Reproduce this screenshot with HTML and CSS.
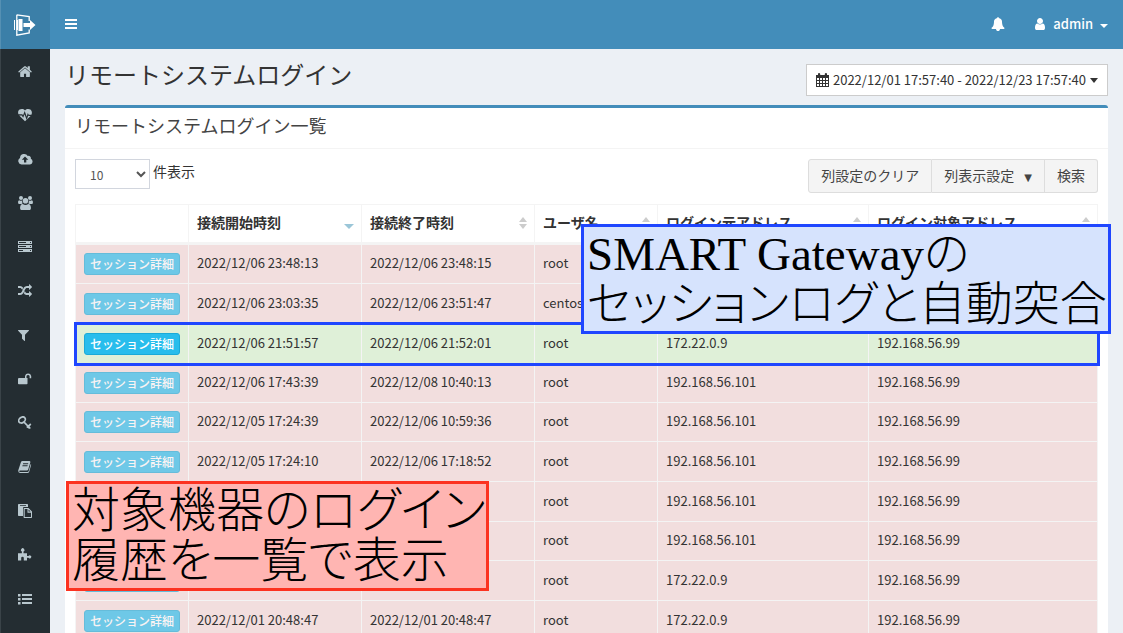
FILE: index.html
```html
<!DOCTYPE html>
<html lang="ja">
<head>
<meta charset="utf-8">
<title>リモートシステムログイン</title>
<link rel="stylesheet" href="styles.css">
</head>
<body>
<header class="topbar">
  <a class="logo" href="#" aria-label="ホーム">
    <svg width="22" height="22" viewBox="0 0 22 22"><path d="M2.8 .8 15.2 2.6V7M15.2 15.5V19L2.8 21.2V.8" fill="none" stroke="#fff" stroke-width="1.3"/><path d="M0 6h1v10H0zM2.5 6H4v10H2.500zM4.500 5H8.500V17H4.500zM9.500 9H16V6L21.500 11 16 16V13H9.500z" fill="#fff"/></svg>
  </a>
  <button class="bar-btn" aria-label="メニュー">
    <svg width="12" height="12" viewBox="0 0 12 12"><path d="M0 0h12v2H0zM0 4h12v2H0zM0 8h12v2H0z" fill="currentColor"/></svg>
  </button>
  <nav class="top-right">
    <button class="bar-btn" aria-label="通知">
      <svg width="14" height="14" viewBox="0 0 1792 1792"><path fill="currentColor" d="M1728 1408q0 52-38 90t-90 38h-448q0 106-75 181t-181 75-181-75-75-181h-448q-52 0-90-38t-38-90q50-42 91-88t85-119.500 74.500-158.500 50-206 19.500-260q0-152 117-282.500t307-158.500q-8-19-8-39 0-40 28-68t68-28 68 28 28 68q0 20-8 39 190 28 307 158.500t117 282.500q0 139 19.500 260t50 206 74.500 158.500 85 119.500 91 88z"/></svg>
    </button>
    <button class="bar-btn">
      <svg width="14" height="14" viewBox="0 0 1792 1792"><path fill="currentColor" d="M1536 1399q0 109-62.500 187t-150.500 78h-854q-88 0-150.500-78t-62.500-187q0-85 8.500-160.500t31.500-152 58.500-131 94-89 134.500-34.500q131 128 313 128t313-128q76 0 134.500 34.500t94 89 58.500 131 31.500 152 8.500 160.500zm-256-887q0 159-112.500 271.500t-271.500 112.500-271.500-112.500-112.500-271.500 112.500-271.500 271.500-112.500 271.500 112.500 112.500 271.500z"/></svg>
      <span>admin</span><i class="caret"></i>
    </button>
  </nav>
</header>
<div class="layout">
<nav class="side">
  <a href="#" aria-label="ホーム"><svg viewBox="60 0 1664 1664"><path d="M1472 992v480q0 26-19 45t-45 19h-384v-384h-256v384h-384q-26 0-45-19t-19-45v-480q0-1 .5-3t.5-3l575-474 575 474q1 2 1 6zm223-69l-62 74q-8 9-21 11h-3q-13 0-21-7l-692-577-692 577q-12 8-24 7-13-2-21-11l-62-74q-8-10-7-23.500t11-21.500l719-599q32-26 76-26t76 26l244 204v-195q0-14 9-23t23-9h192q14 0 23 9t9 23v408l219 182q10 8 11 21.500t-7 23.500z"/></svg></a>
  <a href="#" aria-label="稼働状況"><svg viewBox="0 0 14 14"><path d="M7 2.500C8.500 .5 11 .6 12.400 1.600 14 2.900 14.300 5 13.400 6.700H10.700L9.800 5 8.700 8.800 6.700 3 5 7.400 4.400 6.300H.5C-.3 4.500 .1 2.600 1.600 1.600 3 .6 5.500 .5 7 2.500z"/><path d="M1.200 7.500H3.700L5.200 9.800 6.500 6.200 8.700 12 10.300 7.200 10.500 7.900H12.600L7 13.300z"/></svg></a>
  <a href="#" aria-label="アップロード"><svg class="wide" viewBox="0 0 15 14"><path fill-rule="evenodd" d="M3.500 12.500A3.500 3.500 0 0 1 2 6 4.200 4.200 0 0 1 9.800 4 2.300 2.300 0 0 1 12.800 6.800 3 3 0 0 1 12 12.500zM7 4.500 3.800 7.800H6V10.500H8.300V7.800H10.300z"/></svg></a>
  <a href="#" aria-label="グループ"><svg class="wide" viewBox="0 0 15 14"><circle cx="3" cy="2" r="2"/><circle cx="12" cy="2" r="2"/><circle cx="7.500" cy="4.700" r="2.800"/><path d="M.2 7.500C-.2 5 .5 4.300 1.300 4.200 2.300 5 3.200 4.800 4 4.500 3.900 5.800 4.200 6.600 4.700 7.300L3.500 8H1zM14.800 7.500C15.200 5 14.500 4.300 13.700 4.200 12.700 5 11.800 4.800 11 4.500 11.100 5.800 10.800 6.600 10.300 7.300L11.500 8H14zM4 14C2.300 14 2 13 2.100 11.500 2.200 9.500 3 7.900 4.700 7.900 6.500 9.200 8.500 9.200 10.300 7.900 12 7.900 12.800 9.500 12.900 11.500 13 13 12.700 14 11 14z"/></svg></a>
  <a href="#" aria-label="サーバ"><svg viewBox="0 0 14 14"><path fill-rule="evenodd" d="M0 1H14V4H0zM1 2V3H8V2zM12 2V3H13V2zM0 5H14V8H0zM1 6V7H8V6zM12 6V7H13V6zM0 9H14V12H0zM1 10V11H5V10zM12 10V11H13V10z"/></svg></a>
  <a href="#" aria-label="経路"><svg viewBox="0 0 1792 1792"><path d="M666 481q-60 92-137 273-22-45-37-72.500t-40.500-63.500-51-56.500-63-35-81.500-14.500h-224q-14 0-23-9t-9-23v-192q0-14 9-23t23-9h224q250 0 410 225zm1126 799q0 14-9 23l-320 320q-9 9-23 9-13 0-22.500-9.500t-9.500-22.500v-192q-32 0-85 .5t-81 1-73-1-71-5-64-10.500-63-18.500-58-28.500-59-40-55-53.500-56-69.500q59-93 136-273 22 45 37 72.500t40.500 63.500 51 56.500 63 35 81.500 14.500h256v-192q0-14 9-23t23-9q12 0 24 10l319 319q9 9 9 23zm0-896q0 14-9 23l-320 320q-9 9-23 9-13 0-22.500-9.500t-9.500-22.500v-192h-256q-48 0-87 15t-69 45-51 61.500-45 77.500q-32 62-78 171-29 66-49.500 111t-54 105-64 100-74 83-90 68.500-106.500 42-128 16.500h-224q-14 0-23-9t-9-23v-192q0-14 9-23t23-9h224q48 0 87-15t69-45 51-61.500 45-77.500q32-62 78-171 29-66 49.500-111t54-105 64-100 74-83 90-68.500 106.500-42 128-16.500h256v-192q0-14 9-23t23-9q12 0 24 10l319 319q9 9 9 23z"/></svg></a>
  <a href="#" aria-label="フィルタ"><svg viewBox="192 0 1792 1792"><path d="M1595 295q17 41-14 70l-493 493v742q0 42-39 59-13 5-25 5-27 0-45-19l-256-256q-19-19-19-45v-486l-493-493q-31-29-14-70 17-39 59-39h1280q42 0 59 39z"/></svg></a>
  <a href="#" aria-label="ロック解除"><svg viewBox="0 0 14 14"><path d="M0 7Q0 6 1 6H7V4A3.200 3.200 0 0 1 13.200 4V6.300H11.600V4A1.700 1.700 0 0 0 8.500 4V6H9.500V11.500Q9.500 12.300 8.700 12.300H.8Q0 12.300 0 11.500z"/></svg></a>
  <a href="#" aria-label="鍵"><svg viewBox="0 0 14 14"><ellipse cx="4" cy="4" rx="3.600" ry="2.700" transform="rotate(-35 4 4)" fill="none" stroke="currentColor" stroke-width="1.700"/><path fill="none" stroke="currentColor" stroke-width="1.700" d="M5.800 5.800 12.300 12.500M8.800 11.500 10.800 9.300M10.800 9.800 12.800 8M9.700 12 11.500 10"/></svg></a>
  <a href="#" aria-label="ログ"><svg viewBox="0 0 14 14"><path fill-rule="evenodd" d="M4.500 1H11.500Q12.700 1.200 12.300 2.500L10.200 9.500Q9.900 10.400 9 10.400H2Q1 10.500 1.300 11.500 1.500 12 2.200 12H9.500Q10.400 12 10.700 11L12.700 4Q13.400 4.300 13 5.500L11.200 11.700Q10.800 13 9.500 13H2Q.1 12.800 .2 10.500L2.900 2.300Q3.300 1 4.500 1zM5.200 3.300 4.900 4.200H10L10.300 3.300zM4.600 5.300 4.300 6.200H9.400L9.700 5.300z"/></svg></a>
  <a href="#" aria-label="貼り付け"><svg viewBox="0 0 14 14"><path fill-rule="evenodd" d="M.7 0H9.300Q10 0 10 .7V3H6Q5 3 5 4V12H.7Q0 12 0 11.300V.7Q0 0 .7 0zM2 1V1.700H8V1zM6.300 4H10.500L14 7.500V13.300Q14 14 13.300 14H6.300Q5.600 14 5.600 13.300V4.700Q5.600 4 6.300 4zM6.700 5V13H13V8.700H9.500V5zM10.500 5.500V7.600H12.600z"/></svg></a>
  <a href="#" aria-label="プラグイン"><svg viewBox="0 0 14 14"><path d="M0 5.300H3.900V3.500A1.700 1.700 0 1 1 5.500 3.500V5.300H9V8H10.500A1.500 1.500 0 1 1 10.500 9.700H9V12.500H5.800V10A1.300 1.300 0 0 0 3.200 10V12.500H0z"/></svg></a>
  <a href="#" aria-label="一覧"><svg viewBox="0 0 14 14"><path d="M0 2h2.500v2.500H0zM4 2h10v2H4zM0 6h2.500v2.500H0zM4 6h10v2H4zM0 10h2.500v2.500H0zM4 10h10v2H4z"/></svg></a>
</nav>
<main class="content">
  <div class="page-head">
    <h1>リモートシステムログイン</h1>
    <button class="range">
      <svg width="13" height="14" viewBox="0 0 13 14"><path fill="currentColor" fill-rule="evenodd" d="M0 2H2V1Q2 0 3 0 4.200 0 4.200 1V2H8.800V1Q8.800 0 10 0 11 0 11 1V2H13V14H0zM1 5V7H3V5zM4 5V7H6V5zM7 5V7H9V5zM10 5V7H12V5zM1 8V10H3V8zM4 8V10H6V8zM7 8V10H9V8zM10 8V10H12V8zM1 11V13H3V11zM4 11V13H6V11zM7 11V13H9V11zM10 11V13H12V11z"/></svg>
      <span>2022/12/01 17:57:40 - 2022/12/23 17:57:40</span><i class="caret"></i>
    </button>
  </div>
  <section class="box">
    <h2>リモートシステムログイン一覧</h2>
    <div class="box-body">
      <div class="tools">
        <label class="length"><select><option>10</option><option>25</option></select>件表示</label>
        <div class="group"><button>列設定のクリア</button><button>列表示設定<span class="tri">▼</span></button><button>検索</button></div>
      </div>
      <table>
        <colgroup><col class="c1"><col class="c2"><col class="c2"><col class="c3"><col class="c4"><col></colgroup>
        <thead><tr><th></th><th class="sorted">接続開始時刻</th><th class="sort">接続終了時刻</th><th class="sort">ユーザ名</th><th class="sort">ログイン元アドレス</th><th class="sort">ログイン対象アドレス</th></tr></thead>
        <tbody>
          <tr><td><button class="detail" disabled>セッション詳細</button></td><td>2022/12/06 23:48:13</td><td>2022/12/06 23:48:15</td><td>root</td><td></td><td></td></tr>
          <tr><td><button class="detail" disabled>セッション詳細</button></td><td>2022/12/06 23:03:35</td><td>2022/12/06 23:51:47</td><td>centos</td><td></td><td></td></tr>
          <tr class="match"><td><button class="detail">セッション詳細</button></td><td>2022/12/06 21:51:57</td><td>2022/12/06 21:52:01</td><td>root</td><td>172.22.0.9</td><td>192.168.56.99</td></tr>
          <tr><td><button class="detail" disabled>セッション詳細</button></td><td>2022/12/06 17:43:39</td><td>2022/12/08 10:40:13</td><td>root</td><td>192.168.56.101</td><td>192.168.56.99</td></tr>
          <tr><td><button class="detail" disabled>セッション詳細</button></td><td>2022/12/05 17:24:39</td><td>2022/12/06 10:59:36</td><td>root</td><td>192.168.56.101</td><td>192.168.56.99</td></tr>
          <tr><td><button class="detail" disabled>セッション詳細</button></td><td>2022/12/05 17:24:10</td><td>2022/12/06 17:18:52</td><td>root</td><td>192.168.56.101</td><td>192.168.56.99</td></tr>
          <tr><td></td><td></td><td></td><td>root</td><td>192.168.56.101</td><td>192.168.56.99</td></tr>
          <tr><td></td><td></td><td></td><td>root</td><td>192.168.56.101</td><td>192.168.56.99</td></tr>
          <tr><td><button class="detail" disabled aria-label="詳細"></button></td><td></td><td></td><td>root</td><td>172.22.0.9</td><td>192.168.56.99</td></tr>
          <tr><td><button class="detail" disabled>セッション詳細</button></td><td>2022/12/01 20:48:47</td><td>2022/12/01 20:48:47</td><td>root</td><td>172.22.0.9</td><td>192.168.56.99</td></tr>
        </tbody>
      </table>
    </div>
  </section>
  <p class="note note-blue">SMART Gatewayの<br>セッションログと自動突合</p>
  <p class="note note-red">対象機器のログイン<br>履歴を一覧で表示</p>
</main>
</div>
</body>
</html>
```
FILE: styles.css
```css
* { box-sizing: border-box; }
html { height: 100%; overflow: hidden; }
body {
  margin: 0; height: 100%; display: flex; flex-direction: column;
  background: #ecf0f5; color: #333;
  font: 13px/20px "Noto Sans CJK JP", sans-serif;
}
button, select { font: inherit; color: inherit; margin: 0; }
svg { display: block; flex: none; }

.topbar { display: flex; flex: none; height: 49px; background: #438dba; color: #fff; }
.logo { width: 50px; display: flex; align-items: center; justify-content: center; padding-right: 2px; background: #3b7fa8; border-left: 1px solid #5590b3; }
.bar-btn { display: flex; align-items: center; gap: 6px; padding: 0 15px; border: 0; background: none; font-weight: 500; }
.top-right { display: flex; margin-left: auto; }
.top-right .bar-btn { padding: 0 15px 2px 13px; }
.caret { border: 4px solid transparent; border-top-color: currentColor; border-bottom: 0; }
.top-right .caret { margin-left: 1px; margin-top: 4px; }

.layout { flex: 1; display: flex; min-height: 0; }
.side { width: 50px; flex: none; display: flex; flex-direction: column; background: #242d32; border-left: 1px solid #3a4348; }
.side a { height: 44px; flex: none; display: flex; align-items: center; padding-left: 17px; color: #b8c7ce; }
.side svg { width: 14px; height: 14px; fill: currentColor; }
.side svg.wide { width: 15px; }

.content { flex: 1; min-width: 0; position: relative; padding: 15px; }
.page-head { display: flex; justify-content: space-between; height: 41px; }
h1 { margin: 0; font-size: 24px; font-weight: 400; line-height: 20px; }
.range { display: flex; align-items: center; gap: 4px; height: 32px; padding: 0 9px; background: #fff; border: 1px solid #ccc; }
.range .caret { border-width: 5px 4px 0; }

.box { background: #fff; border-top: 3px solid #438dba; border-radius: 3px 3px 0 0; }
h2 { margin: 0; padding: 7px 10px 13px; font-size: 18px; font-weight: 400; line-height: 20px; color: #444; border-bottom: 1px solid #f4f4f4; }
.box-body { padding: 10px; }
.tools { display: flex; justify-content: space-between; align-items: flex-start; height: 45px; }
.length { display: flex; gap: 3px; font-size: 14px; line-height: 24px; }
.length select { width: 75px; height: 30px; padding: 0 0 0 10px; font-size: 12px; background: #fff; border: 1px solid #d2d6de; border-radius: 0; color: #555; }
.group { display: flex; }
.group button { height: 34px; padding: 0 12px 2px; font-size: 14px; background: #f4f4f4; border: 1px solid #ddd; color: #444; }
.group button + button { border-left: 0; }
.group button:first-child { border-radius: 3px 0 0 3px; }
.group button:last-child { border-radius: 0 3px 3px 0; }
.tri { margin-left: 10px; font: 10px "DejaVu Sans", sans-serif; }

table { width: 100%; table-layout: fixed; border-collapse: collapse; }
.c1 { width: 113px; }
.c2 { width: 173px; }
.c3 { width: 123px; }
.c4 { width: 211px; }
th, td { padding: 0 8px 2px; border: 1px solid #f4f4f4; text-align: left; white-space: nowrap; }
th { height: 39px; padding-bottom: 4px; font-size: 14px; font-weight: 700; border-bottom-width: 3px; }
.sort, .sorted { position: relative; }
.sort::before, .sort::after, .sorted::after { content: ""; position: absolute; right: 7px; border: solid transparent; }
.sort::before { top: 12px; border-width: 0 4px 5px; border-bottom-color: #ccc; }
.sort::after { top: 19px; border-width: 5px 4px 0; border-top-color: #ccc; }
.sorted::after { top: 19px; border-width: 5px 5px 0; border-top-color: #9bc6d8; }
td { height: 40px; background: #f2dede; }
td:first-child { padding-bottom: 0; }
tr:nth-child(4n) td, tr:nth-child(5) td { height: 39px; }
.match td { background: #dff0d8; }
.match { outline: 3px solid #1f46ff; outline-offset: -1px; }
.detail { display: block; width: 100%; max-width: 96px; height: 22px; padding: 0 5px; font-size: 12px; font-weight: 500; line-height: 18px; color: #fff; background: #28bdec; border: 1px solid #1aaad8; border-radius: 3px; }
.detail:disabled { opacity: .65; }

.note { position: absolute; margin: 0; color: #000; font-family: "Liberation Serif", "Noto Sans CJK JP", serif; font-weight: 300; font-feature-settings: "palt"; line-height: 50px; white-space: nowrap; }
.note-blue { top: 175px; right: 12px; width: 530px; padding: 2px 3px; font-size: 47px; background: #d6e3fd; border: 3px solid #1f46ff; }
.note-red { top: 432px; left: 16px; width: 423px; padding: 2px 3px; font-size: 48px; background: #ffb5b2; border: 3px solid #fc3220; }
```
